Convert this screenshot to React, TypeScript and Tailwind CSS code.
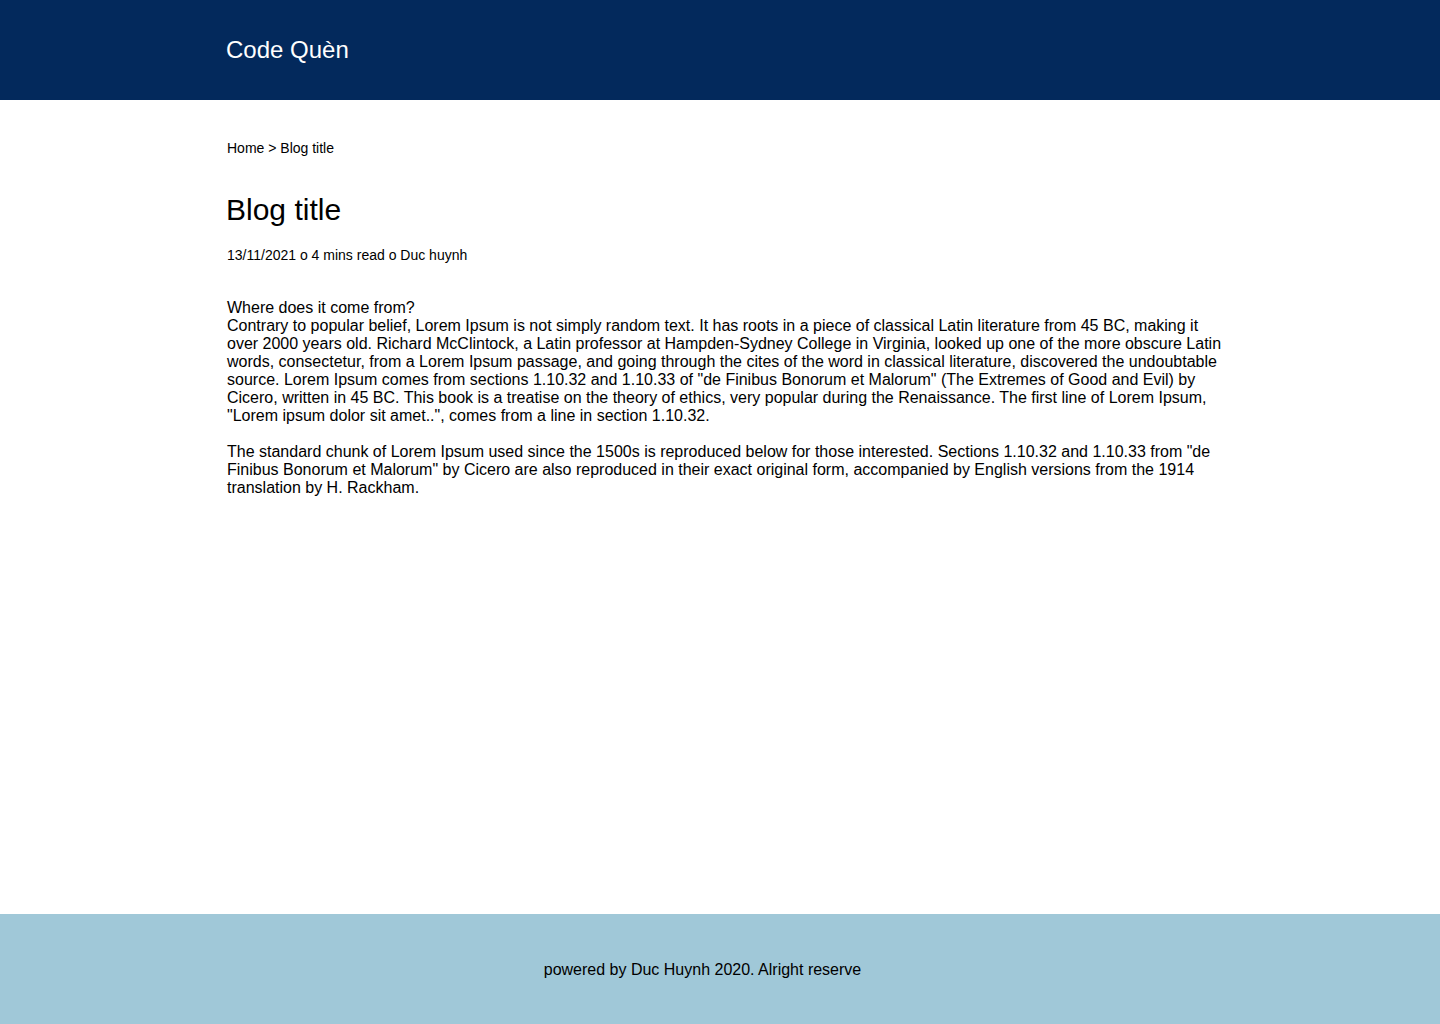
export default function App() {
  return (
    <div className="min-h-screen flex flex-col bg-white text-black font-['Liberation_Sans',Arial,sans-serif]">
      {/* header */}
      <header className="h-[100px] bg-[#03295c] flex items-center pl-[226px]">
        <span className="text-white text-[24px] leading-[28px]">Code Quèn</span>
      </header>

      {/* main */}
      <main className="flex-1 pl-[227px]">
        <div className="w-[1000px]">
          <div className="mt-[40px] text-[14px] leading-[16px]">Home &gt; Blog title</div>
          <h1 className="mt-[37px] -ml-px text-[30px] leading-[34px]">Blog title</h1>
          <div className="mt-[20px] text-[14px] leading-[16px]">13/11/2021 o 4 mins read o Duc huynh</div>
          <div className="mt-[36px] text-[16px] leading-[18px]">
            <p>Where does it come from?</p>
            <p>
              Contrary to popular belief, Lorem Ipsum is not simply random text. It has roots in a piece of classical Latin
              literature from 45 BC, making it over 2000 years old. Richard McClintock, a Latin professor at Hampden-Sydney
              College in Virginia, looked up one of the more obscure Latin words, consectetur, from a Lorem Ipsum passage, and
              going through the cites of the word in classical literature, discovered the undoubtable source. Lorem Ipsum comes
              from sections 1.10.32 and 1.10.33 of "de Finibus Bonorum et Malorum" (The Extremes of Good and Evil) by Cicero,
              written in 45 BC. This book is a treatise on the theory of ethics, very popular during the Renaissance. The first
              line of Lorem Ipsum, "Lorem ipsum dolor sit amet..", comes from a line in section 1.10.32.
            </p>
            <p className="mt-[18px]">
              The standard chunk of Lorem Ipsum used since the 1500s is reproduced below for those interested. Sections 1.10.32
              and 1.10.33 from "de Finibus Bonorum et Malorum" by Cicero are also reproduced in their exact original form,
              accompanied by English versions from the 1914 translation by H. Rackham.
            </p>
          </div>
        </div>
      </main>

      {/* footer */}
      <footer className="h-[110px] bg-[#a0c8d8] flex items-center justify-center pr-[35px] pt-[2px]">
        <span className="text-[16px] leading-[18px]">powered by Duc Huynh 2020. Alright reserve</span>
      </footer>
    </div>
  )
}
